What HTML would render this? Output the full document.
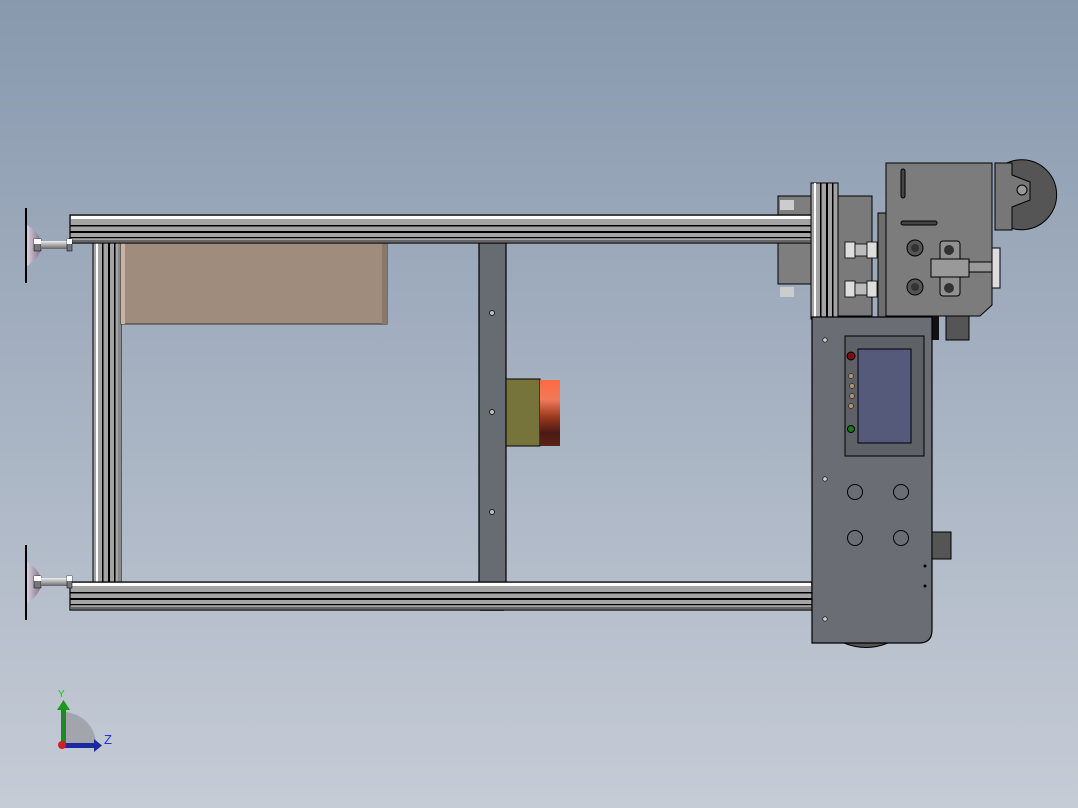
<!DOCTYPE html>
<html><head><meta charset="utf-8"><style>html,body{margin:0;padding:0;overflow:hidden}body{width:1078px;height:808px}</style></head>
<body>
<svg width="1078" height="808" viewBox="0 0 1078 808" xmlns="http://www.w3.org/2000/svg" font-family="Liberation Sans, sans-serif">
<defs>
<linearGradient id="bg" x1="0" y1="0" x2="0" y2="1"><stop offset="0" stop-color="#8899ae"/><stop offset="1" stop-color="#c6ccd6"/></linearGradient>
<linearGradient id="red" x1="0" y1="0" x2="0" y2="1"><stop offset="0" stop-color="#ff6a40"/><stop offset="0.3" stop-color="#f07a5a"/><stop offset="0.55" stop-color="#a03a20"/><stop offset="0.8" stop-color="#4a1a14"/><stop offset="1" stop-color="#5a2418"/></linearGradient>
<linearGradient id="dome" x1="0" y1="0" x2="1" y2="0"><stop offset="0" stop-color="#d8d0dc"/><stop offset="1" stop-color="#7a6a80"/></linearGradient>
<linearGradient id="rod" x1="0" y1="0" x2="0" y2="1"><stop offset="0" stop-color="#eee"/><stop offset="1" stop-color="#666"/></linearGradient>
<g id="hrail">
<rect x="0" y="0" width="742" height="28" fill="#a4a4a4" stroke="#000" stroke-width="1.2"/>
<rect x="1" y="1" width="740" height="3" fill="#fff"/>
<rect x="0" y="10" width="742" height="1.5" fill="#000"/>
<rect x="0" y="16" width="742" height="2" fill="#000"/>
<rect x="0" y="22" width="742" height="1.2" fill="#000"/>
<rect x="0" y="25" width="742" height="2" fill="#666"/>
</g>
<g id="foot">
<path d="M26 0 L26 75" stroke="#000" stroke-width="2"/>
<path d="M27 17 Q40 25 42 37 Q40 50 27 58 Z" fill="url(#dome)"/>
<rect x="34" y="31" width="7" height="12" fill="#777" stroke="#000" stroke-width="0.5"/>
<rect x="34" y="31" width="7" height="5" fill="#fff"/>
<rect x="41" y="33" width="27" height="8" fill="url(#rod)"/>
<rect x="67" y="31" width="5" height="12" fill="#777" stroke="#000" stroke-width="0.5"/>
<rect x="67" y="31" width="5" height="5" fill="#fff"/>
</g>
</defs>
<rect width="1078" height="808" fill="url(#bg)"/>

<!-- left vertical rail -->
<g>
<rect x="93" y="240" width="28" height="345" fill="#a4a4a4" stroke="#000"/>
<rect x="96" y="240" width="2" height="345" fill="#fff"/>
<rect x="102" y="240" width="1.5" height="345" fill="#000"/>
<rect x="108" y="240" width="2" height="345" fill="#000"/>
<rect x="114" y="240" width="1.5" height="345" fill="#000"/>
<rect x="118" y="240" width="3" height="345" fill="#888"/>
</g>
<rect x="121" y="243" width="266" height="81" fill="#a08c7c" stroke="#333"/>
<rect x="382" y="243" width="5" height="81" fill="#8a7868"/>
<rect x="121" y="243" width="4" height="81" fill="#c8b4a0"/>
<rect x="479" y="243" width="27" height="340" fill="#676b72" stroke="#000" stroke-width="1.2"/>
<circle cx="492" cy="313" r="2.5" fill="#bbb" stroke="#000" stroke-width="0.7"/>
<circle cx="492" cy="412" r="2.5" fill="#bbb" stroke="#000" stroke-width="0.7"/>
<circle cx="492" cy="512" r="2.5" fill="#bbb" stroke="#000" stroke-width="0.7"/>
<rect x="480" y="608" width="24" height="3" fill="#555"/>
<rect x="506" y="379" width="34" height="67" fill="#76743a" stroke="#000"/>
<rect x="540" y="380" width="20" height="66" fill="url(#red)"/>

<!-- right machinery back bracket -->
<rect x="778" y="196" width="58" height="88" fill="#7e7e7e" stroke="#000"/>
<rect x="780" y="200" width="14" height="10" fill="#ccc"/>
<rect x="780" y="287" width="14" height="10" fill="#ccc"/>
<rect x="836" y="196" width="36" height="120" fill="#7a7a7a" stroke="#000"/>
<rect x="878" y="213" width="10" height="105" fill="#6e6e6e" stroke="#000"/>

<use href="#hrail" x="70" y="215"/>
<use href="#hrail" x="70" y="582"/>
<use href="#foot" x="0" y="208"/>
<use href="#foot" x="0" y="545"/>

<g fill="#ddd" stroke="#000" stroke-width="0.8">
<rect x="845" y="242" width="10" height="16"/><rect x="855" y="244" width="12" height="12" fill="#bbb"/><rect x="867" y="242" width="10" height="16"/>
<rect x="886" y="242" width="10" height="16"/><rect x="896" y="245" width="8" height="10" fill="#bbb"/>
<rect x="845" y="281" width="10" height="16"/><rect x="855" y="283" width="12" height="12" fill="#bbb"/><rect x="867" y="281" width="10" height="16"/>
<rect x="886" y="281" width="10" height="16"/><rect x="896" y="284" width="8" height="10" fill="#bbb"/>
</g>
<rect x="811" y="183" width="27" height="136" fill="#a4a4a4" stroke="#000"/>
<rect x="814" y="183" width="2" height="136" fill="#fff"/>
<rect x="820" y="183" width="1.5" height="136" fill="#000"/>
<rect x="826" y="183" width="2" height="136" fill="#000"/>
<rect x="832" y="183" width="1.5" height="136" fill="#000"/>

<path d="M886 163 L992 163 L992 305 L980 316 L886 316 Z" fill="#7c7c7c" stroke="#000"/>
<path d="M999 168 A35 35 0 1 1 1001 223 L995 223 L995 168 Z" fill="#555" stroke="#000"/>
<path d="M995 163 L1012 163 L1012 175 L1030 182 L1030 200 L1012 207 L1012 230 L995 230 Z" fill="#777" stroke="#000"/>
<circle cx="1022" cy="190" r="5" fill="#999" stroke="#000"/>
<rect x="901" y="169" width="4" height="29" rx="2" fill="#444" stroke="#000"/>
<rect x="901" y="221" width="36" height="4" rx="2" fill="#444" stroke="#000"/>
<circle cx="915" cy="248" r="8" fill="#555" stroke="#000"/><circle cx="915" cy="248" r="4" fill="#333"/>
<circle cx="915" cy="287" r="8" fill="#555" stroke="#000"/><circle cx="915" cy="287" r="4" fill="#333"/>
<rect x="940" y="241" width="20" height="55" rx="3" fill="#909090" stroke="#000"/>
<circle cx="949" cy="250" r="5" fill="#333"/><circle cx="949" cy="288" r="5" fill="#333"/>
<rect x="931" y="259" width="38" height="18" fill="#999" stroke="#000"/>
<rect x="969" y="262" width="24" height="10" fill="#999" stroke="#000"/>
<rect x="992" y="248" width="8" height="40" fill="#ddd" stroke="#000"/>
<rect x="946" y="316" width="23" height="24" fill="#555" stroke="#000"/>
<rect x="931" y="316" width="8" height="24" fill="#111"/>

<path d="M844 643 Q866 652 888 643 Z" fill="#555" stroke="#000"/>
<path d="M812 317 L932 317 L932 630 Q932 643 919 643 L812 643 Z" fill="#6a6e74" stroke="#000" stroke-width="1.2"/>
<rect x="932" y="532" width="19" height="27" fill="#555" stroke="#000"/>
<rect x="845" y="336" width="79" height="120" fill="#5e6166" stroke="#000"/>
<rect x="858" y="349" width="53" height="94" fill="#555a7a" stroke="#000"/>
<circle cx="851" cy="356" r="4" fill="#7a1010" stroke="#000"/>
<circle cx="851" cy="429" r="3.5" fill="#1a7a1a" stroke="#000"/>
<g fill="#b09070" stroke="#000" stroke-width="0.5"><circle cx="851" cy="376" r="2.5"/><circle cx="852" cy="386" r="2.5"/><circle cx="852" cy="396" r="2.5"/><circle cx="851" cy="406" r="2.5"/></g>
<g fill="none" stroke="#000" stroke-width="1"><circle cx="855" cy="492" r="7.5"/><circle cx="901" cy="492" r="7.5"/><circle cx="855" cy="538" r="7.5"/><circle cx="901" cy="538" r="7.5"/></g>
<g fill="#ccc" stroke="#000" stroke-width="0.6"><circle cx="825" cy="340" r="2.2"/><circle cx="825" cy="479" r="2.2"/><circle cx="825" cy="619" r="2.2"/></g>
<circle cx="925" cy="566" r="1.5" fill="#000"/><circle cx="925" cy="586" r="1.5" fill="#000"/>

<path d="M63 746 L63 712 A33 33 0 0 1 96 746 Z" fill="#a2a6ac"/>
<rect x="61" y="708" width="5" height="38" fill="#1c8a1c"/>
<path d="M57 710 L63.5 700 L70 710 Z" fill="#1c9a1c"/>
<rect x="63" y="743" width="32" height="5" fill="#1c2aa0"/>
<path d="M94 739 L102 745.5 L94 752 Z" fill="#1c2aa0"/>
<circle cx="62" cy="745" r="4" fill="#d02020"/>
<text x="58" y="697" font-size="10" fill="#20c020">Y</text>
<text x="104" y="744" font-size="13" fill="#2030e0">Z</text>
</svg>
</body></html>
